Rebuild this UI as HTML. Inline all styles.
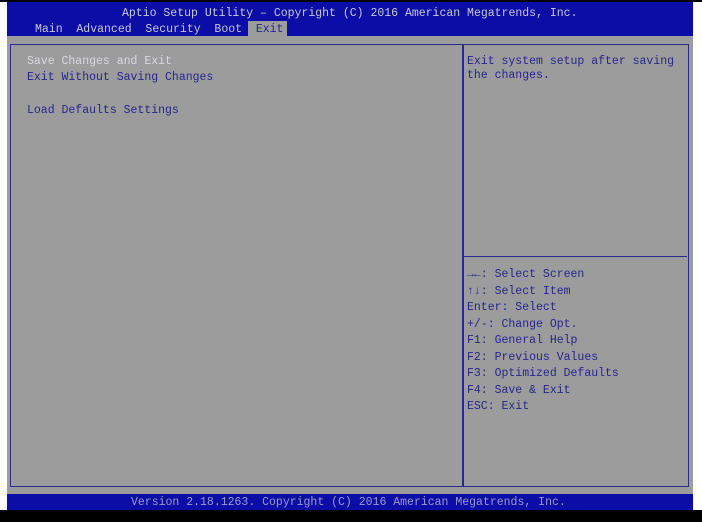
<!DOCTYPE html>
<html><head><style>
body{margin:0;width:702px;height:522px;background:#fff;position:relative;overflow:hidden;font-family:"Liberation Mono",monospace;font-size:11.5px;}
.t{position:absolute;white-space:pre;line-height:14px;}
#blk1{position:absolute;left:0;top:0;width:702px;height:2px;background:#000}
#hdr{position:absolute;left:7px;top:2px;width:686px;height:34px;background:#0c0ca6}
#body{position:absolute;left:7px;top:36px;width:686px;height:458px;background:#9c9c9c}
#ftr{position:absolute;left:7px;top:494px;width:686px;height:16px;background:#0c0ca6}
#blk2{position:absolute;left:0;top:510px;width:702px;height:12px;background:#000}
#box{position:absolute;left:10px;top:44px;width:677px;height:441px;border:1px solid #2a2a8c}
#vd{position:absolute;left:462px;top:44px;width:2px;height:443px;background:#2a2a8c}
#hd{position:absolute;left:464px;top:256px;width:223px;height:1px;background:#2a2a8c}
#tab{position:absolute;left:248px;top:21px;width:39px;height:15px;background:#9c9c9c}
.w{color:#d8d8e0}.b{color:#26268e}.l{color:#c8c8d8}
</style></head><body>
<div id="blk1"></div><div id="hdr"></div><div id="body"></div><div id="ftr"></div><div id="blk2"></div>
<div id="box"></div><div id="vd"></div><div id="hd"></div><div id="tab"></div>
<div class="t l" style="left:122px;top:7px">Aptio Setup Utility – Copyright (C) 2016 American Megatrends, Inc.</div>
<div class="t l" style="left:35px;top:23px">Main  Advanced  Security  Boot  <span style="color:#26268e">Exit</span></div>
<div class="t w" style="left:27px;top:55px">Save Changes and Exit</div>
<div class="t b" style="left:27px;top:71px">Exit Without Saving Changes</div>
<div class="t b" style="left:27px;top:104px">Load Defaults Settings</div>
<div class="t b" style="left:467px;top:55px">Exit system setup after saving
the changes.</div>
<div class="t b" style="left:467px;top:267px;line-height:16.5px">→←: Select Screen
↑↓: Select Item
Enter: Select
+/-: Change Opt.
F1: General Help
F2: Previous Values
F3: Optimized Defaults
F4: Save &amp; Exit
ESC: Exit</div>
<div class="t l" style="left:131px;top:496px;color:#9a9ac8">Version 2.18.1263. Copyright (C) 2016 American Megatrends, Inc.</div>
</body></html>
